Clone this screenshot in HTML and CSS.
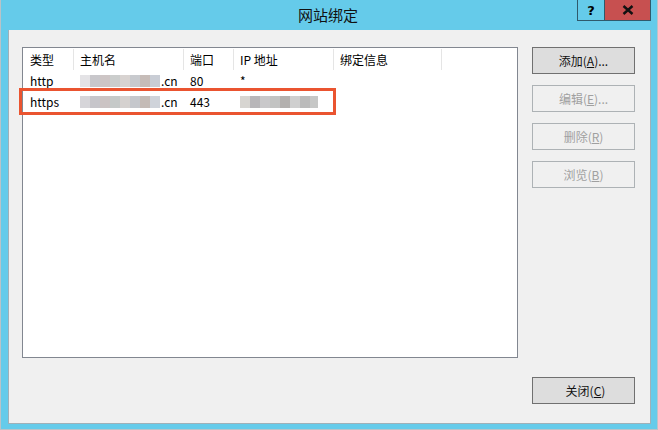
FILE: index.html
```html
<!DOCTYPE html>
<html lang="zh">
<head>
<meta charset="utf-8">
<title>网站绑定</title>
<link rel="stylesheet" href="styles.css">
</head>
<body>
<div class="window">
  <div class="titlebar">
    <div class="title">网站绑定</div>
    <div class="caption-btns">
      <div class="cbtn help">?</div>
      <div class="cbtn close">
        <svg width="12" height="10" viewBox="0 0 12 10"><path d="M1.5 1 L10.5 9 M10.5 1 L1.5 9" stroke="#111" stroke-width="2.4" fill="none"/></svg>
      </div>
    </div>
  </div>
  <div class="client">
    <div class="top">
      <div class="list">
        <div class="row head">
          <div class="c c1">类型</div>
          <div class="c c2">主机名</div>
          <div class="c c3">端口</div>
          <div class="c c4">IP 地址</div>
          <div class="c c5">绑定信息</div>
        </div>
        <div class="row">
          <div class="c c1">http</div>
          <div class="c c2"><span class="blur b1"><i></i><i></i><i></i><i></i><i></i><i></i><i></i><i></i></span>.cn</div>
          <div class="c c3">80</div>
          <div class="c c4">*</div>
          <div class="c c5"></div>
        </div>
        <div class="row">
          <div class="c c1">https</div>
          <div class="c c2"><span class="blur b2"><i></i><i></i><i></i><i></i><i></i><i></i><i></i><i></i></span>.cn</div>
          <div class="c c3">443</div>
          <div class="c c4"><span class="blur b3"><i></i><i></i><i></i><i></i><i></i><i></i><i></i><i></i></span></div>
          <div class="c c5"></div>
        </div>
        <div class="highlight"></div>
      </div>
      <div class="buttons">
        <div class="btn">添加(<u>A</u>)...</div>
        <div class="btn disabled">编辑(<u>E</u>)...</div>
        <div class="btn disabled">删除(<u>R</u>)</div>
        <div class="btn disabled">浏览(<u>B</u>)</div>
      </div>
    </div>
    <div class="bottom">
      <div class="btn">关闭(<u>C</u>)</div>
    </div>
  </div>
</div>
</body>
</html>
```
FILE: styles.css
```css
* { box-sizing: border-box; }
html, body { margin: 0; padding: 0; }
body {
  width: 658px;
  height: 430px;
  overflow: hidden;
  font-family: "Noto Sans CJK SC", "Noto Sans", sans-serif;
  font-size: 12px;
  color: #000;
}
.window {
  width: 658px;
  height: 430px;
  background: #65cbea;
  border-left: 1px solid #b9c3c8;
  border-right: 1px solid #b9c3c8;
  border-bottom: 1px solid #b9c3c8;
  display: flex;
  flex-direction: column;
  align-items: flex-start;
}
.titlebar {
  position: relative;
  width: 100%;
  height: 30px;
  flex: none;
}
.title {
  text-align: center;
  font-size: 15px;
  line-height: 30px;
  color: #111;
  padding-right: 2px;
}
.caption-btns {
  position: absolute;
  top: 0;
  right: 6px;
  display: flex;
  height: 21px;
  border-left: 1px solid #2f5a6c;
  border-bottom: 1px solid #2f5a6c;
  border-right: 1px solid #2f5a6c;
}
.cbtn {
  height: 20px;
  display: flex;
  align-items: center;
  justify-content: center;
}
.help {
  width: 27px;
  font-weight: bold;
  font-family: "DejaVu Sans", sans-serif;
  font-size: 13px;
  border-right: 1px solid #2f5a6c;
}
.close {
  width: 45px;
  background: #c75050;
}
.client {
  margin-left: 7px;
  width: 643px;
  height: 394px;
  background: #f0f0f0;
  border: 1px solid #9fb0b8;
  border-top: none;
  padding: 17px 15px 0 13px;
  display: flex;
  flex-direction: column;
}
.top {
  display: flex;
  gap: 14px;
}
.list {
  position: relative;
  width: 496px;
  height: 311px;
  background: #fff;
  border: 1px solid #828790;
  padding-top: 1px;
}
.row {
  display: flex;
  height: 21px;
  align-items: center;
}
.row.head { height: 21px; }
.c {
  height: 100%;
  display: flex;
  align-items: center;
  padding-left: 6px;
  white-space: nowrap;
}
.head .c { border-right: 1px solid #e5e5e5; padding-left: 6px; }
.c1 { width: 51px; }
.c2 { width: 110px; }
.c3 { width: 50px; }
.c4 { width: 100px; }
.c5 { width: 108px; }
.row .c1 { padding-left: 7px; }
.blur {
  display: inline-flex;
  height: 12px;
  margin-right: 1px;
}
.blur i { width: 10px; height: 12px; display: block; }
.b1 i:nth-child(1) { background: #e4e3e6; }
.b1 i:nth-child(2) { background: #c8c7cb; }
.b1 i:nth-child(3) { background: #cdc5c5; }
.b1 i:nth-child(4) { background: #cbcdcc; }
.b1 i:nth-child(5) { background: #d8d3d1; }
.b1 i:nth-child(6) { background: #c8cace; }
.b1 i:nth-child(7) { background: #c6bcb8; }
.b1 i:nth-child(8) { background: #c9cdd5; }
.b2 i:nth-child(1) { background: #d6d5d9; }
.b2 i:nth-child(2) { background: #c6c5ca; }
.b2 i:nth-child(3) { background: #cbc3c3; }
.b2 i:nth-child(4) { background: #c5c9c8; }
.b2 i:nth-child(5) { background: #d5d1cf; }
.b2 i:nth-child(6) { background: #c5c7cc; }
.b2 i:nth-child(7) { background: #c4bbb6; }
.b2 i:nth-child(8) { background: #cfd3da; }
.b3 i:nth-child(1) { background: #d7d5d1; }
.b3 i:nth-child(2) { background: #b8b6b9; }
.b3 i:nth-child(3) { background: #c9c8ca; }
.b3 i:nth-child(4) { background: #c2c3c2; }
.b3 i:nth-child(5) { background: #b3b0ae; }
.b3 i:nth-child(6) { background: #cfcfcf; }
.b3 i:nth-child(7) { background: #bbbbbb; }
.b3 i:nth-child(8) { background: #c6c7c6; width: 8px; }
.highlight {
  position: absolute;
  left: -4px;
  top: 40px;
  width: 317px;
  height: 27px;
  border: 3px solid #ea5430;
}
.buttons {
  display: flex;
  flex-direction: column;
  gap: 11px;
}
.btn {
  width: 103px;
  height: 27px;
  background: #dddddd;
  border: 1px solid #707070;
  display: flex;
  align-items: center;
  justify-content: center;
  color: #111;
}
.btn u { text-underline-offset: 1px; }
.btn.disabled {
  background: #f0f0f0;
  border-color: #adb2b5;
  color: #a0a0a0;
}
.bottom {
  display: flex;
  justify-content: flex-end;
  padding-top: 19px;
}
.bottom .btn { padding-left: 4px; }
```
